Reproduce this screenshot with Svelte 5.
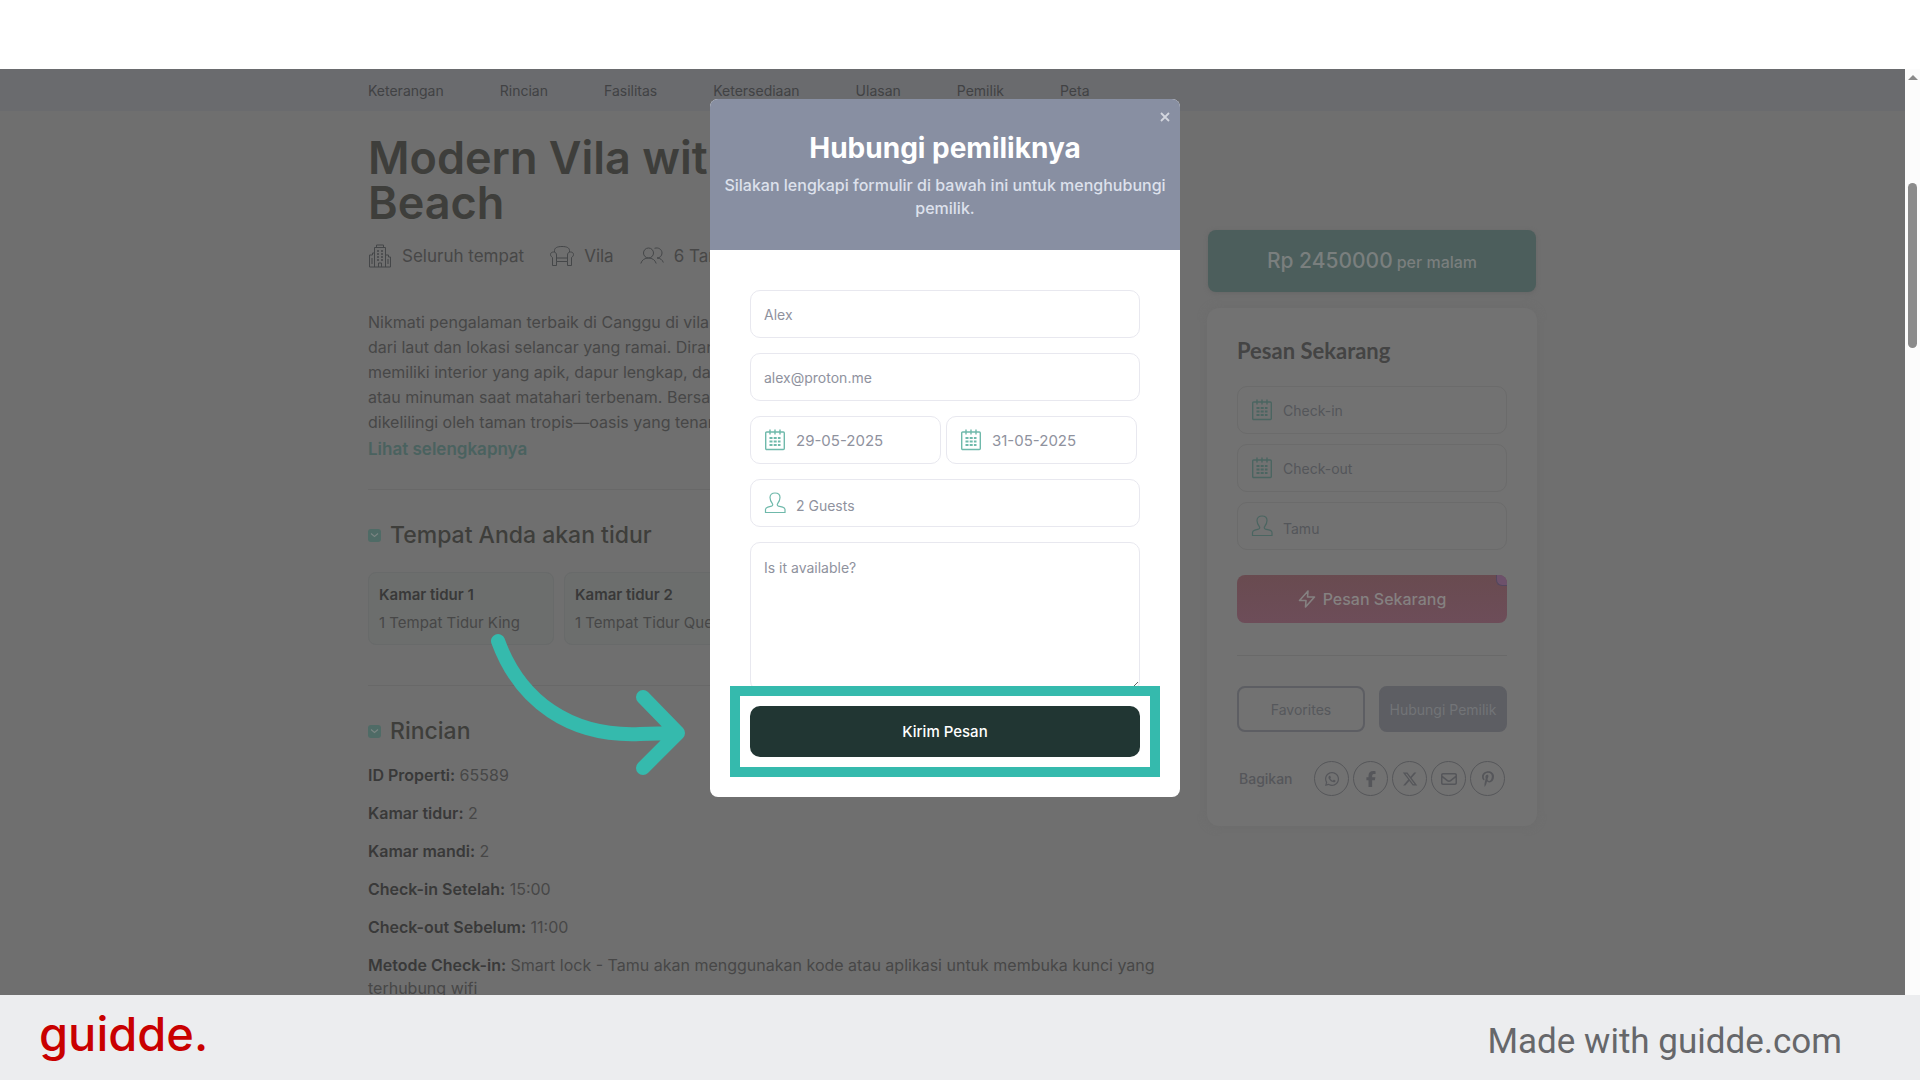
<script lang="ts">
  let name = $state('Alex');
  let email = $state('alex@proton.me');
  let checkIn = $state('29-05-2025');
  let checkOut = $state('31-05-2025');
  let guests = $state('2 Guests');
  let message = $state('Is it available?');

  const sections = ['Keterangan', 'Rincian', 'Fasilitas', 'Ketersediaan', 'Ulasan', 'Pemilik', 'Peta'];

  const description = [
    'Nikmati pengalaman terbaik di Canggu di vila',
    'dari laut dan lokasi selancar yang ramai. Dirancang',
    'memiliki interior yang apik, dapur lengkap, dan',
    'atau minuman saat matahari terbenam. Bersantai',
    'dikelilingi oleh taman tropis—oasis yang tenang'
  ];

  const rooms = [
    { title: 'Kamar tidur 1', bed: '1 Tempat Tidur King' },
    { title: 'Kamar tidur 2', bed: '1 Tempat Tidur Queen' }
  ];

  const details = [
    { label: 'ID Properti:', value: '65589' },
    { label: 'Kamar tidur:', value: '2' },
    { label: 'Kamar mandi:', value: '2' },
    { label: 'Check-in Setelah:', value: '15:00' },
    { label: 'Check-out Sebelum:', value: '11:00' },
    {
      label: 'Metode Check-in:',
      value: 'Smart lock - Tamu akan menggunakan kode atau aplikasi untuk membuka kunci yang terhubung wifi'
    }
  ];

  const socials = [
    {
      name: 'WhatsApp',
      box: '0 0 448 512',
      d: 'M380.9 97.1C339 55.1 283.2 32 223.9 32c-122.4 0-222 99.6-222 222 0 39.1 10.2 77.3 29.6 111L0 480l117.7-30.9c32.4 17.7 68.9 27 106.1 27h.1c122.3 0 224.1-99.6 224.1-222 0-59.3-25.2-115-67.1-157zm-157 341.6c-33.2 0-65.7-8.9-94-25.7l-6.7-4-69.8 18.3L72 359.2l-4.4-7c-18.5-29.4-28.2-63.3-28.2-98.2 0-101.7 82.8-184.5 184.6-184.5 49.3 0 95.6 19.2 130.4 54.1 34.8 34.9 56.2 81.2 56.1 130.5 0 101.8-84.9 184.6-186.6 184.6zm101.2-138.2c-5.5-2.8-32.8-16.2-37.9-18-5.1-1.9-8.8-2.8-12.5 2.8-3.7 5.6-14.3 18-17.6 21.8-3.2 3.7-6.5 4.2-12 1.4-32.6-16.3-54-29.1-75.5-66-5.7-9.8 5.7-9.1 16.3-30.3 1.8-3.7.9-6.9-.5-9.7-1.4-2.8-12.5-30.1-17.1-41.2-4.5-10.8-9.1-9.3-12.5-9.5-3.2-.2-6.9-.2-10.6-.2-3.7 0-9.7 1.4-14.8 6.9-5.1 5.6-19.4 19-19.4 46.3 0 27.3 19.9 53.7 22.6 57.4 2.8 3.7 39.1 59.7 94.8 83.8 35.2 15.2 49 16.5 66.6 13.9 10.7-1.6 32.8-13.4 37.4-26.4 4.6-13 4.6-24.1 3.2-26.4-1.3-2.5-5-3.9-10.5-6.6z'
    },
    {
      name: 'Facebook',
      box: '0 0 320 512',
      d: 'M80 299.3V512H196V299.3h86.5l18-97.8H196V166.9c0-51.7 20.3-71.5 72.7-71.5c16.3 0 29.4 .4 37 1.2V7.9C291.4 4 256.4 0 236.2 0C129.3 0 80 50.5 80 159.4v42.1H14v97.8H80z'
    },
    {
      name: 'X',
      box: '0 0 512 512',
      d: 'M389.2 48h70.6L305.6 224.2 487 464H345L233.7 318.6 106.5 464H35.8L200.7 275.5 26.8 48H172.4L272.9 180.9 389.2 48zM364.4 421.8h39.1L151.1 88h-42L364.4 421.8z'
    },
    {
      name: 'Email',
      box: '0 0 512 512',
      d: 'M64 112c-8.8 0-16 7.2-16 16v22.1L220.5 291.7c20.7 17 50.4 17 71.1 0L464 150.1V128c0-8.8-7.2-16-16-16H64zM48 212.2V384c0 8.8 7.2 16 16 16H448c8.8 0 16-7.2 16-16V212.2L322 328.8c-38.4 31.5-93.7 31.5-132 0L48 212.2zM0 128C0 92.7 28.7 64 64 64H448c35.3 0 64 28.7 64 64V384c0 35.3-28.7 64-64 64H64c-35.3 0-64-28.7-64-64V128z'
    },
    {
      name: 'Pinterest',
      box: '0 0 384 512',
      d: 'M204 6.5C101.4 6.5 0 74.9 0 185.6 0 256 39.6 296 63.6 296c9.9 0 15.6-27.6 15.6-35.4 0-9.3-23.7-29.1-23.7-67.8 0-80.4 61.2-137.4 140.4-137.4 68.1 0 118.5 38.7 118.5 109.8 0 53.1-21.3 152.7-90.3 152.7-24.9 0-46.2-18-46.2-43.8 0-37.8 26.4-74.4 26.4-113.4 0-66.2-93.9-54.2-93.9 25.8 0 16.8 2.1 35.4 9.6 50.7-13.8 59.4-42 147.9-42 209.1 0 18.9 2.7 37.5 4.5 56.4 3.4 3.8 1.7 3.4 6.9 1.5 50.4-69 48.6-82.5 71.4-172.8 12.3 23.4 44.1 36 69.3 36 106.2 0 153.9-103.5 153.9-196.8C384 71.3 298.2 6.5 204 6.5z'
    }
  ];
</script>

{#snippet calendarIcon()}
  <svg class="field-icon" viewBox="0 0 22 22" fill="none" stroke="currentColor" aria-hidden="true">
    <rect x="1.7" y="3" width="18.6" height="17.5" rx="1" stroke-width="1.4" />
    <path d="M6 .5v5M11 .5v5M16 .5v5" stroke-width="1.4" />
    <path d="M5.500 9h11M5.500 12.500h11M5.500 16h11" stroke-width="1.8" stroke-dasharray="3 1.2" />
  </svg>
{/snippet}

{#snippet personIcon()}
  <svg class="field-icon" viewBox="0 0 22 22" fill="none" stroke="currentColor" stroke-width="1.2" aria-hidden="true">
    <path d="M1.500 20.500v-3c0-1.500 1-2 2.300-2.400l3.700-1c1.500-.5 1.500-1.500.7-2.700C6.800 9.500 6 7.800 6 5.500 6 2.600 8 1 11 1s5 1.600 5 4.500c0 2.300-.8 4-2.200 5.900-.8 1.200-.8 2.200.7 2.700l4.200 1c1.300.4 2.300.9 2.300 2.400v3z" />
  </svg>
{/snippet}

{#snippet chevronBadge()}
  <svg class="badge" viewBox="0 0 13 13" aria-hidden="true">
    <rect width="13" height="13" rx="3" fill="#4f6b66" />
    <path d="M3 4.500l3.500 3 3.500-3" fill="none" stroke="#7b8583" stroke-width="1.1" />
  </svg>
{/snippet}

<div class="screen">
  <div class="top-strip"></div>

  <div class="browser">
    <div class="page">
      <nav class="tabs">
        <div class="wrap tab-list">
          {#each sections as section}
            <a href="#{section.toLowerCase()}">{section}</a>
          {/each}
        </div>
      </nav>

      <div class="wrap columns">
        <main class="listing">
          <h1>Modern Vila with<br />Beach</h1>

          <div class="meta">
            <span class="meta-item">
              <svg viewBox="0 0 24 24" fill="none" stroke="currentColor" aria-hidden="true">
                <path d="M6.500 23V3.500h11V23M8.500 3.500V1h7v2.500M6.500 9h-2v2H1.500v12h21V13h-2v-2h-3M10.500 23v-4h3v4M4 14v6M20 15v5" />
                <path d="M9 7h2M13 7h2M9 10h2M13 10h2M9 13h2M13 13h2M9 16h2M13 16h2" stroke-width="1.6" />
              </svg>
              Seluruh tempat
            </span>
            <span class="meta-item">
              <svg viewBox="0 0 24 24" fill="none" stroke="currentColor" aria-hidden="true">
                <path d="M4.500 8V6.500C4.500 4 7 2.500 12 2.500S19.500 4 19.500 6.500V8M6.500 17.500v4H2.500v-8C1 12.500.5 11.500.5 10.500.5 9 1.700 8 3.500 8s3 1 3 3v6.500h11V11c0-2 1.200-3 3-3s3 1 3 2.500c0 1-.5 2-2 3v8h-4v-4M6.500 14h11" />
              </svg>
              Vila
            </span>
            <span class="meta-item">
              <svg viewBox="0 0 24 24" fill="none" stroke="currentColor" aria-hidden="true">
                <circle cx="8.500" cy="9" r="5" />
                <path d="M.8 19.500c1-3.500 4-5.500 7.700-5.500s6.700 2 7.700 5.500M14.500 4.300c4-1.300 7.500 1.200 7.500 4.700 0 3-2.300 5-5 5 3.500.3 5.500 1.900 6.300 4.500" />
              </svg>
              6 Tamu
            </span>
          </div>

          <p class="description">
            {#each description as line}
              <span>{line}</span>
            {/each}
          </p>
          <a class="more" href="#keterangan">Lihat selengkapnya</a>

          <hr />

          <h2>{@render chevronBadge()}Tempat Anda akan tidur</h2>
          <div class="rooms">
            {#each rooms as room}
              <div class="room">
                <strong>{room.title}</strong>
                <span>{room.bed}</span>
              </div>
            {/each}
          </div>

          <hr />

          <h2>{@render chevronBadge()}Rincian</h2>
          <div class="details">
            {#each details as item}
              <p><strong>{item.label}</strong> {item.value}</p>
            {/each}
          </div>
        </main>

        <aside class="sidebar">
          <div class="price">Rp 2450000 <small>per malam</small></div>

          <form class="booking" onsubmit={(e) => e.preventDefault()}>
            <h3>Pesan Sekarang</h3>
            <div class="booking-fields">
              <label class="field">
                {@render calendarIcon()}
                <input type="text" placeholder="Check-in" aria-label="Check-in" />
              </label>
              <label class="field">
                {@render calendarIcon()}
                <input type="text" placeholder="Check-out" aria-label="Check-out" />
              </label>
              <label class="field guests">
                {@render personIcon()}
                <input type="text" placeholder="Tamu" aria-label="Tamu" />
              </label>
            </div>

            <button type="submit" class="book">
              <svg viewBox="0 0 18 18" fill="none" stroke="currentColor" stroke-width="1.6" stroke-linejoin="round" aria-hidden="true">
                <path d="M10 1 1.500 10.500H8L7.500 17 16.500 7H9.500z" />
              </svg>
              Pesan Sekarang
            </button>

            <div class="actions">
              <button type="button" class="favorite">Favorites</button>
              <button type="button" class="contact">Hubungi Pemilik</button>
            </div>

            <div class="share">
              <span>Bagikan</span>
              <div class="share-links">
                {#each socials as social}
                  <a href="#bagikan" aria-label={social.name}>
                    <svg viewBox={social.box} fill="currentColor" aria-hidden="true"><path d={social.d} /></svg>
                  </a>
                {/each}
              </div>
            </div>
          </form>
        </aside>
      </div>

      <div class="overlay">
        <div class="modal" role="dialog" aria-labelledby="modal-title">
          <header class="modal-header">
            <button type="button" class="close" aria-label="Tutup">
              <svg viewBox="0 0 10 10" stroke="currentColor" stroke-width="1.8" aria-hidden="true"><path d="M1 1l8 8M9 1 1 9" /></svg>
            </button>
            <h2 id="modal-title">Hubungi pemiliknya</h2>
            <p>Silakan lengkapi formulir di bawah ini untuk menghubungi pemilik.</p>
          </header>

          <form class="modal-body" onsubmit={(e) => e.preventDefault()}>
            <label class="field"><input type="text" bind:value={name} aria-label="Nama" /></label>
            <label class="field"><input type="text" bind:value={email} aria-label="Email" /></label>
            <div class="dates">
              <label class="field">
                {@render calendarIcon()}
                <input type="text" bind:value={checkIn} aria-label="Check-in" />
              </label>
              <label class="field">
                {@render calendarIcon()}
                <input type="text" bind:value={checkOut} aria-label="Check-out" />
              </label>
            </div>
            <label class="field guests">
              {@render personIcon()}
              <input type="text" bind:value={guests} aria-label="Tamu" />
            </label>
            <textarea bind:value={message} aria-label="Pesan"></textarea>
            <div class="highlight">
              <button type="submit" class="send">Kirim Pesan</button>
            </div>
          </form>
          <svg class="arrow" viewBox="0 0 200 150" fill="none" stroke="#35baad" stroke-width="14" stroke-linecap="round" stroke-linejoin="round" aria-hidden="true">
            <path d="M8 10C30 70 80 106 150 103L187 102M153 66l35 36-35 35" />
          </svg>
        </div>
      </div>
    </div>

    <div class="scrollbar">
      <div class="scroll-up"></div>
      <div class="thumb"></div>
    </div>
  </div>

  <footer>
    <a class="logo" href="#guidde">guidde.</a>
    <span class="credit">Made with guidde.com</span>
  </footer>
</div>

<style>
  :global(body) {
    margin: 0;
    font-family: Inter, 'Open Sans', sans-serif;
  }

  .screen,
  .screen :global(*) {
    box-sizing: border-box;
  }

  .screen {
    display: flex;
    flex-direction: column;
    height: 100vh;
    overflow: hidden;
    background: #fff;
  }

  h1,
  h2,
  h3,
  p {
    margin: 0;
  }

  a {
    color: inherit;
    text-decoration: none;
  }

  button,
  input,
  textarea {
    font-family: inherit;
  }

  button {
    border: 0;
    padding: 0;
    cursor: pointer;
  }

  .top-strip {
    flex: none;
    height: 69px;
  }

  .browser {
    display: flex;
    flex: 1;
    min-height: 0;
  }

  .page {
    position: relative;
    flex: 1;
    overflow: hidden;
    background: #6f6f6f;
    color: #474747;
  }

  .wrap {
    width: 100%;
    max-width: 1169px;
    margin: 0 auto;
  }

  .tabs {
    background: #6a6b6e;
  }

  .tab-list {
    display: flex;
    gap: 56px;
    height: 42px;
    align-items: center;
    font-size: 14px;
    color: #414244;
  }

  .columns {
    display: flex;
    justify-content: space-between;
    align-items: flex-start;
  }

  .listing {
    width: 798px;
    padding-top: 24px;
  }

  h1 {
    font-size: 45px;
    line-height: 45px;
    font-weight: 600;
    color: #3e3e3b;
  }

  .meta {
    display: flex;
    gap: 26px;
    margin-top: 19px;
    font-size: 17px;
    line-height: 24px;
  }

  .meta-item {
    display: flex;
    align-items: center;
    gap: 10px;
  }

  .meta-item svg {
    width: 24px;
    height: 24px;
    color: #454749;
  }

  .description {
    margin-top: 42px;
    font-size: 16px;
    line-height: 25px;
  }

  .description span {
    display: block;
  }

  .more {
    display: block;
    margin-top: 2px;
    font-size: 17px;
    line-height: 25px;
    font-weight: 600;
    color: #4a625f;
  }

  hr {
    height: 1px;
    margin: 27px 0 30px;
    border: 0;
    background: #686868;
  }

  .listing h2 {
    display: flex;
    align-items: center;
    gap: 9px;
    font-size: 23px;
    line-height: 30px;
    font-weight: 500;
    color: #3e3e3b;
  }

  .badge {
    width: 13px;
    height: 13px;
  }

  .rooms {
    display: flex;
    gap: 10px;
    margin: 22px 0 40px;
  }

  .room {
    display: flex;
    flex-direction: column;
    gap: 5px;
    width: 186px;
    height: 73px;
    padding: 10px;
    border: 1px solid #686a6a;
    border-radius: 8px;
    background: #6c6e6d;
    font-size: 15px;
    line-height: 23px;
    white-space: nowrap;
  }

  .room strong,
  .details strong {
    font-weight: 600;
    color: #393939;
  }

  .details {
    display: flex;
    flex-direction: column;
    gap: 15px;
    margin-top: 18px;
    font-size: 16px;
    line-height: 23px;
  }

  .sidebar {
    width: 330px;
    padding-top: 119px;
  }

  .price {
    display: flex;
    justify-content: center;
    align-items: baseline;
    gap: 4px;
    height: 62px;
    margin: 0 1px;
    border-radius: 8px;
    background: #4c5e5c;
    color: #7a7f7e;
    font-size: 21px;
    line-height: 62px;
    font-weight: 500;
    box-shadow: 0 1px 4px #666;
  }

  .price small {
    font-size: 16px;
  }

  .booking {
    margin-top: 16px;
    padding: 30px;
    border-radius: 12px;
    background: #727272;
    box-shadow: 0 0 8px #6c6c6c;
  }

  h3 {
    font-family: Lato, sans-serif;
    font-size: 22px;
    line-height: 26px;
    font-weight: 700;
    color: #444;
  }

  .booking-fields {
    display: flex;
    flex-direction: column;
    gap: 10px;
    margin: 22px 0 25px;
  }

  .field {
    display: flex;
    align-items: center;
    gap: 10px;
    height: 48px;
    padding: 0 13px;
    border: 1px solid #e8e8ef;
    border-radius: 10px;
    color: #6fb9ab;
  }

  .field input {
    flex: 1;
    width: 100%;
    min-width: 0;
    padding: 0;
    border: 0;
    outline: 0;
    background: none;
    font-size: 14px;
    color: #8f929e;
  }

  .dates input {
    font-size: 15px;
  }

  .guests input {
    padding-top: 4px;
  }

  .field-icon {
    flex: none;
    width: 22px;
    height: 22px;
  }

  .booking .field {
    border-color: #6b6b6b;
    color: #4b6561;
  }

  .booking input::placeholder {
    color: #54565a;
    opacity: 1;
  }

  .book {
    position: relative;
    display: flex;
    justify-content: center;
    align-items: center;
    gap: 7px;
    width: 100%;
    height: 48px;
    overflow: hidden;
    border-radius: 8px;
    background: linear-gradient(#694b50, #6d4d59);
    color: #858181;
    font-size: 16px;
    font-weight: 500;
  }

  .book::after {
    content: '';
    position: absolute;
    top: 0;
    right: 0;
    width: 10px;
    height: 10px;
    border: 1px solid #53475e;
    border-width: 0 0 1px 1px;
    border-radius: 0 0 0 6px;
    background: #6d516b;
  }

  .book svg {
    width: 18px;
    height: 18px;
  }

  .actions {
    display: flex;
    gap: 14px;
    margin-top: 32px;
    padding-top: 30px;
    border-top: 1px solid #696969;
  }

  .actions button {
    flex: 1;
    height: 46px;
    border: 2px solid #5d5e63;
    border-radius: 8px;
    font-size: 14px;
    white-space: nowrap;
  }

  .favorite {
    background: none;
    color: #56585c;
  }

  .contact {
    background: #5d5e63;
    color: #727477;
  }

  .share {
    display: flex;
    justify-content: space-between;
    align-items: center;
    margin-top: 29px;
    padding: 0 2px;
    font-size: 14px;
    font-weight: 500;
    color: #55565a;
  }

  .share-links {
    display: flex;
    gap: 4px;
  }

  .share-links a {
    display: flex;
    justify-content: center;
    align-items: center;
    width: 35px;
    height: 35px;
    border: 1px solid #56575a;
    border-radius: 50%;
  }

  .share-links svg {
    height: 16px;
  }

  .overlay {
    position: absolute;
    inset: 0;
    display: flex;
    justify-content: center;
    align-items: flex-start;
    padding: 30px 15px 0 0;
  }

  .modal {
    position: relative;
    width: 470px;
    border-radius: 8px;
    background: #fff;
  }

  .modal-header {
    position: relative;
    height: 151px;
    padding: 31px 10px 0;
    border-radius: 8px 8px 0 0;
    background: #888fa2;
    text-align: center;
  }

  .modal-header h2 {
    font-size: 28px;
    line-height: 36px;
    font-weight: 700;
    color: #fff;
  }

  .modal-header p {
    margin-top: 8px;
    font-size: 16px;
    line-height: 23px;
    font-weight: 500;
    color: #dde1ec;
  }

  .close {
    position: absolute;
    top: 13px;
    right: 10px;
    display: flex;
    background: none;
    color: #d3d6de;
  }

  .close svg {
    width: 10px;
    height: 10px;
  }

  .modal-body {
    display: flex;
    flex-direction: column;
    gap: 15px;
    padding: 40px;
  }

  .dates {
    display: flex;
    gap: 5px;
    padding-right: 3px;
  }

  .dates .field {
    flex: 1;
  }

  textarea {
    display: block;
    width: 100%;
    height: 149px;
    padding: 15px 13px;
    border: 1px solid #e8e8ef;
    border-radius: 10px;
    outline: 0;
    resize: vertical;
    font-size: 14px;
    line-height: 20px;
    color: #8f929e;
  }

  .highlight {
    position: relative;
  }

  /* frame drawn round the submit button */
  .highlight::after {
    content: '';
    position: absolute;
    inset: -20px;
    border: 10px solid #35baad;
    pointer-events: none;
  }

  .send {
    display: block;
    width: 100%;
    height: 51px;
    border-radius: 10px;
    background: #213633;
    color: #fff;
    font-size: 15px;
    font-weight: 500;
  }

  .arrow {
    position: absolute;
    right: 490px;
    bottom: 16px;
    width: 200px;
    height: 150px;
  }

  .scrollbar {
    display: flex;
    flex-direction: column;
    align-items: center;
    gap: 103px;
    width: 15px;
    padding-top: 6px;
    background: #fcfcfc;
  }

  .scroll-up {
    border: 5px solid transparent;
    border-top: 0;
    border-bottom-color: #8b8b8b;
  }

  .thumb {
    width: 9px;
    height: 165px;
    border-radius: 5px;
    background: #8b8b8b;
  }

  footer {
    display: flex;
    flex: none;
    justify-content: space-between;
    align-items: center;
    height: 85px;
    padding: 0 78px 0 39px;
    background: #ecedef;
  }

  .logo {
    padding-bottom: 8px;
    font-size: 47px;
    line-height: 60px;
    font-weight: 500;
    color: #c90000;
  }

  .credit {
    padding-top: 8px;
    font-family: Roboto, sans-serif;
    font-size: 35px;
    line-height: 44px;
    color: #66676a;
  }
</style>
